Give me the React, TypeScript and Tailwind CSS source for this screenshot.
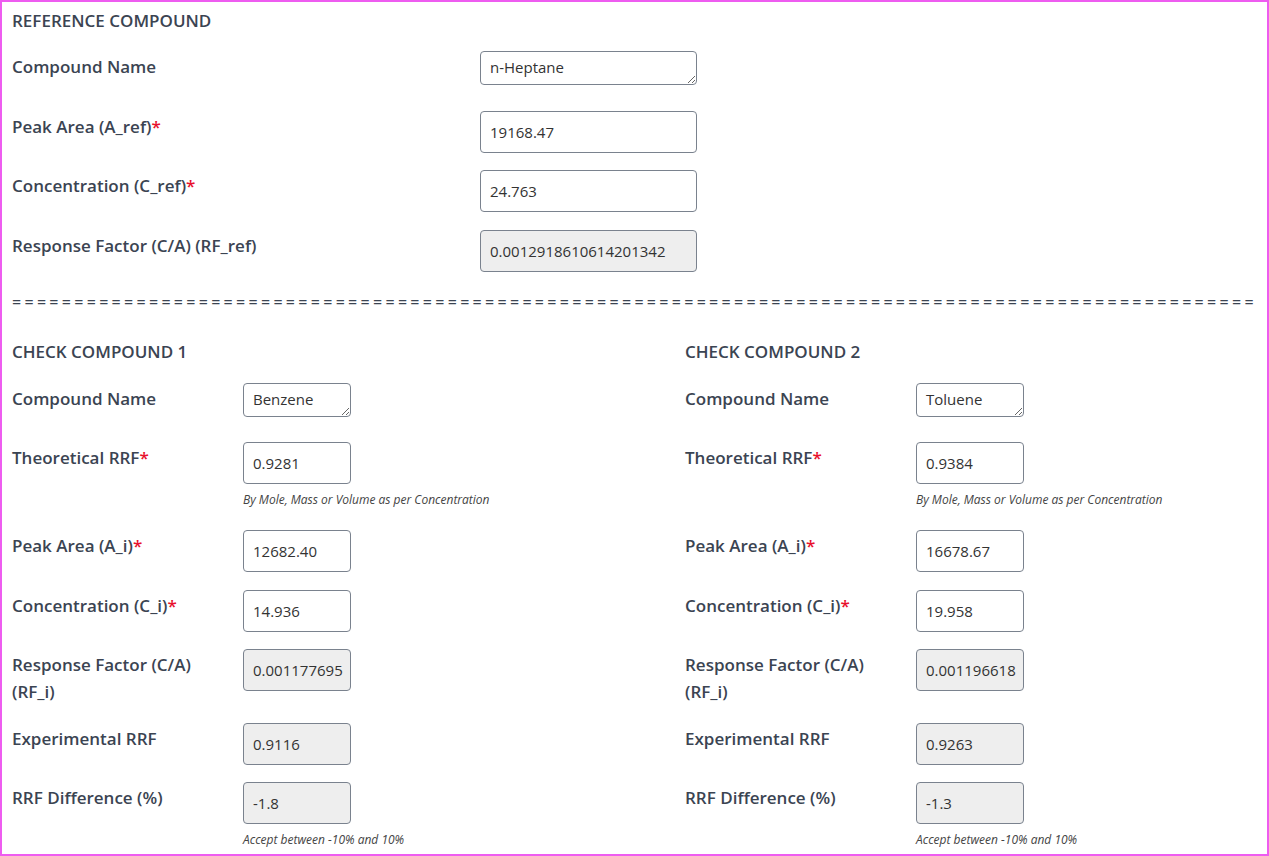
import React from "react";

const Req = () => <span className="text-[#e8112d]">*</span>;

type RowProps = {
  label: React.ReactNode;
  labelW: string;
  value: string;
  kind?: "textarea" | "input" | "readonly";
  inputW: string;
  helper?: string;
};

function Row({ label, labelW, value, kind = "input", inputW, helper }: RowProps) {
  return (
    <div className="mb-[17.5px]">
      <div className="flex items-start min-h-[42px]">
        <div className={`${labelW} shrink-0 pt-[2px] text-[17px] leading-[27px] font-semibold text-[#3b4452]`}>
          {label}
        </div>
        <div>
          {kind === "textarea" ? (
            <textarea
              rows={1}
              defaultValue={value}
              className={`${inputW} h-[34px] block border border-[#7a828e] rounded-[4px] pl-[9px] pr-[4px] pt-[5px] pb-0 text-[15px] leading-[20px] text-[#333] bg-white outline-none resize overflow-hidden`}
            />
          ) : (
            <input
              readOnly={kind === "readonly"}
              defaultValue={value}
              className={`${inputW} h-[42px] block border border-[#7a828e] rounded-[4px] pl-[9px] pr-[1px] text-[15px] text-[#333] outline-none ${
                kind === "readonly" ? "bg-[#eeeeee]" : "bg-white"
              }`}
            />
          )}
          {helper && (
            <div className="mt-[8px] mb-[4.5px] leading-[16px] text-[12px] italic text-[#444]">{helper}</div>
          )}
        </div>
      </div>
    </div>
  );
}

function CheckCol({
  title,
  name,
  rrf,
  area,
  conc,
  rf,
  exp,
  diff,
  className,
}: {
  title: string;
  name: string;
  rrf: string;
  area: string;
  conc: string;
  rf: string;
  exp: string;
  diff: string;
  className: string;
}) {
  const lw = "w-[231px]";
  const iw = "w-[108px]";
  return (
    <div className={className}>
      <div className="text-[17px] leading-[27px] font-semibold text-[#3b4452] mb-[17.5px]">{title}</div>
      <Row label="Compound Name" labelW={lw} inputW={iw} value={name} kind="textarea" />
      <Row
        label={
          <>
            Theoretical RRF<Req />
          </>
        }
        labelW={lw}
        inputW={iw}
        value={rrf}
        helper="By Mole, Mass or Volume as per Concentration"
      />
      <Row
        label={
          <>
            Peak Area (A_i)<Req />
          </>
        }
        labelW={lw}
        inputW={iw}
        value={area}
      />
      <Row
        label={
          <>
            Concentration (C_i)<Req />
          </>
        }
        labelW={lw}
        inputW={iw}
        value={conc}
      />
      <Row
        label={
          <>
            Response Factor (C/A)
            <br />
            (RF_i)
          </>
        }
        labelW={lw}
        inputW={iw}
        value={rf}
        kind="readonly"
      />
      <Row label="Experimental RRF" labelW={lw} inputW={iw} value={exp} kind="readonly" />
      <Row
        label="RRF Difference (%)"
        labelW={lw}
        inputW={iw}
        value={diff}
        kind="readonly"
        helper="Accept between -10% and 10%"
      />
    </div>
  );
}

export default function App() {
  const lw = "w-[468px]";
  const iw = "w-[217px]";
  return (
    <div className="w-[1269px] h-[856px] border-2 border-[#ee5cf0] bg-white overflow-hidden font-['Open_Sans','Noto_Sans',sans-serif] text-[#3b4452]">
      <div className="pl-[10px] pt-[5px]">
        <div className="text-[17px] leading-[27px] font-semibold mb-[17px]">REFERENCE COMPOUND</div>
        <Row label="Compound Name" labelW={lw} inputW={iw} value="n-Heptane" kind="textarea" />
        <Row
          label={
            <>
              Peak Area (A_ref)<Req />
            </>
          }
          labelW={lw}
          inputW={iw}
          value="19168.47"
        />
        <Row
          label={
            <>
              Concentration (C_ref)<Req />
            </>
          }
          labelW={lw}
          inputW={iw}
          value="24.763"
        />
        <Row
          label="Response Factor (C/A) (RF_ref)"
          labelW={lw}
          inputW={iw}
          value="0.0012918610614201342"
          kind="readonly"
        />
        <div className="mt-[12px] mb-[22px] text-[16px] leading-[27px] whitespace-nowrap tracking-[3.3px] text-[#3b4452]">
          {"=".repeat(100)}
        </div>
        <div className="flex">
          <CheckCol
            className="w-[673px] shrink-0"
            title="CHECK COMPOUND 1"
            name="Benzene"
            rrf="0.9281"
            area="12682.40"
            conc="14.936"
            rf="0.001177695"
            exp="0.9116"
            diff="-1.8"
          />
          <CheckCol
            className="flex-1"
            title="CHECK COMPOUND 2"
            name="Toluene"
            rrf="0.9384"
            area="16678.67"
            conc="19.958"
            rf="0.001196618"
            exp="0.9263"
            diff="-1.3"
          />
        </div>
      </div>
    </div>
  );
}
